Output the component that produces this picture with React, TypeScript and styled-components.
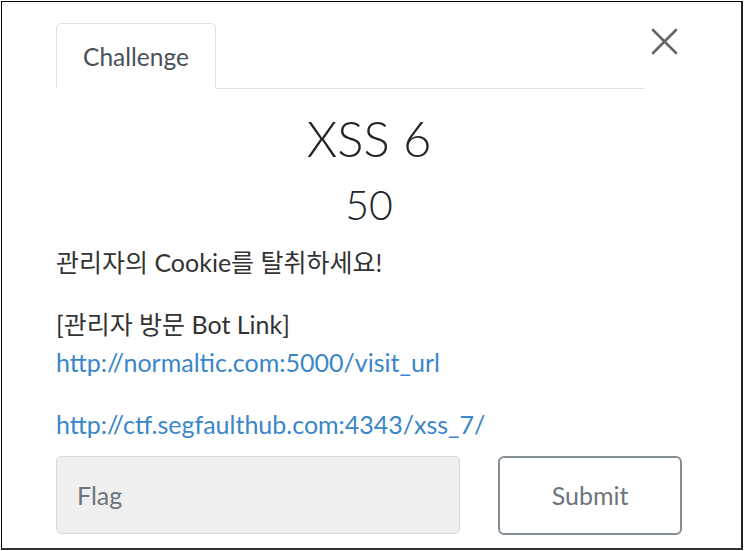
import React from 'react';
import styled, { createGlobalStyle } from 'styled-components';

const GlobalStyle = createGlobalStyle`
  html, body {
    margin: 0;
    padding: 0;
    background: #ffffff;
  }
  body {
    font-family: Lato, "Noto Sans CJK KR", sans-serif;
    color: #212529;
  }
`;

const Frame = styled.div`
  box-sizing: border-box;
  margin: 1px 0 0 1px;
  width: 742px;
  height: 549px;
  border-top: 1px solid #000;
  border-left: 1px solid #000;
  border-right: 2px solid #222;
  border-bottom: 2px solid #333;
  padding: 21px 59px 0 54px;
  overflow: hidden;
`;

const Header = styled.div`
  display: flex;
  align-items: flex-start;
`;

const TabBar = styled.div`
  flex: 0 0 589px;
  display: flex;
  border-bottom: 1px solid #dee2e6;
`;

const Tab = styled.div`
  box-sizing: border-box;
  width: 160px;
  height: 66px;
  display: flex;
  align-items: center;
  justify-content: center;
  margin-bottom: -1px;
  border: 1px solid #dee2e6;
  border-bottom-color: #fff;
  border-radius: 5px 5px 0 0;
  background: #fff;
  font-size: 24.5px;
  color: #495057;
`;

const CloseButton = styled.button`
  margin: 5px 0 0 6px;
  width: 27px;
  height: 27px;
  padding: 0;
  border: none;
  background: none;
  display: flex;
  align-items: center;
  justify-content: center;
  cursor: pointer;
`;

const Body = styled.div`
  display: flex;
  flex-direction: column;
`;

const Title = styled.h3`
  margin: 20px 0 0;
  text-align: center;
  font-size: 49px;
  font-weight: 300;
  line-height: 1.2;
  color: #212529;
`;

const Points = styled.h4`
  margin: 12px 0 0;
  text-align: center;
  font-size: 41px;
  font-weight: 300;
  line-height: 1.2;
  color: #212529;
`;

const Description = styled.div`
  margin-top: 15px;
  font-size: 25px;
  line-height: 1.5;
  color: #333;
`;

const Paragraph = styled.p<{ $gap?: number }>`
  margin: 0 0 ${(p) => p.$gap ?? 25}px;
`;

const Link = styled.a`
  color: #3a86c8;
  text-decoration: none;
`;

const SubmitRow = styled.div`
  display: flex;
  gap: 38px;
`;

const FlagInput = styled.input`
  box-sizing: border-box;
  width: 405px;
  height: 78px;
  padding: 0 20px;
  border: 1px solid #d4d8dc;
  border-radius: 5px;
  background: #efefef;
  font-family: Lato, sans-serif;
  font-size: 25px;
  color: #495057;
  &::placeholder {
    color: #6c757d;
  }
  &:focus {
    outline: none;
  }
`;

const SubmitButton = styled.button`
  box-sizing: border-box;
  width: 184px;
  height: 79px;
  border: 2px solid #868e96;
  border-radius: 6px;
  background: #fff;
  font-family: Lato, sans-serif;
  font-size: 25px;
  color: #6c757d;
  cursor: pointer;
`;

const CloseIcon = () => (
  <svg width="27" height="27" viewBox="0 0 27 27">
    <path d="M2 2 L25 25 M25 2 L2 25" stroke="#666" strokeWidth="2.6" strokeLinecap="round" />
  </svg>
);

export default function App() {
  return (
    <>
      <GlobalStyle />
      <Frame>
        <Header>
          <TabBar>
            <Tab>Challenge</Tab>
          </TabBar>
          <CloseButton aria-label="Close">
            <CloseIcon />
          </CloseButton>
        </Header>
        <Body>
          <Title>XSS 6</Title>
          <Points>50</Points>
          <Description>
            <Paragraph>관리자의 Cookie를 탈취하세요!</Paragraph>
            <Paragraph>
              [관리자 방문 Bot Link]
              <br />
              <Link href="#">http://normaltic.com:5000/visit_url</Link>
            </Paragraph>
            <Paragraph $gap={12}>
              <Link href="#">http://ctf.segfaulthub.com:4343/xss_7/</Link>
            </Paragraph>
          </Description>
          <SubmitRow>
            <FlagInput placeholder="Flag" />
            <SubmitButton>Submit</SubmitButton>
          </SubmitRow>
        </Body>
      </Frame>
    </>
  );
}
